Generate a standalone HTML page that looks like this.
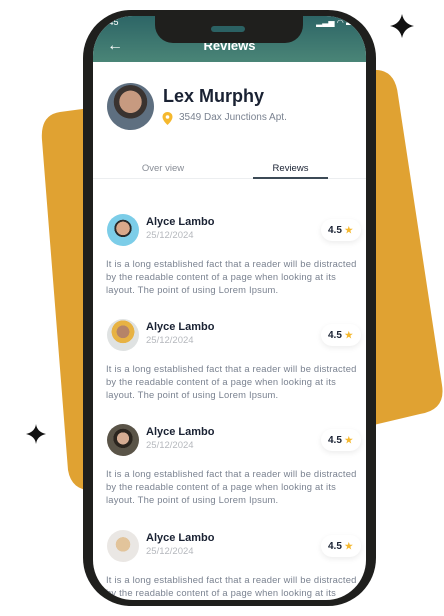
<!DOCTYPE html>
<html><head><style>
*{margin:0;padding:0;box-sizing:border-box}
body{width:444px;height:616px;background:#fff;position:relative;overflow:hidden;font-family:"Liberation Sans",sans-serif}
.phone{position:absolute;left:83px;top:10px;width:293px;height:596px;background:#1f1f1d;border-radius:48px}
.screen{position:absolute;left:10px;top:6px;width:273px;height:584px;background:#fff;border-radius:40px;overflow:hidden}
.hdr{position:absolute;left:0;top:0;width:100%;height:46px;background:linear-gradient(180deg,#2d6566,#4a8577)}
.notch{position:absolute;left:62px;top:0;width:148px;height:27px;background:#1f1f1d;border-radius:0 0 18px 18px}
.av{position:absolute;border-radius:50%}
.name{position:absolute;font-weight:bold;font-size:11px;color:#1a2233}
.date{position:absolute;font-size:9.5px;color:#b5b8bd}
.txt{position:absolute;left:13px;width:254px;font-size:9.4px;letter-spacing:0.2px;line-height:13px;color:#7a8290}
.rate{position:absolute;left:228px;width:40px;height:22px;border-radius:11px;background:#fff;box-shadow:0 2px 6px rgba(0,0,0,.08);font-size:10px;font-weight:bold;color:#1a2233;line-height:22px;padding-left:7px}
.rate span{color:#f5b82e;font-size:9px}
</style></head><body>
<svg style="position:absolute;left:0;top:0" width="444" height="616">
<path d="M60 112 L372 70 Q395 68 398 95 L442 385 Q446 410 420 414 L100 490 Q72 494 68 470 L42 140 Q40 115 60 112Z" fill="#e0a232"/>
<path d="M402 14 Q404 24 414 26 Q404 28 402 38 Q400 28 390 26 Q400 24 402 14Z" fill="#111"/>
<path d="M36 424 Q37 432 46 434 Q37 436 36 444 Q35 436 26 434 Q35 432 36 424Z" fill="#111"/>
</svg>
<div class="phone"><div class="screen">
<div class="hdr"></div>
<div style="position:absolute;left:14px;top:21px;color:#fff;font-size:16px">&#8592;</div>
<div style="position:absolute;left:0;width:100%;top:22px;text-align:center;color:#fff;font-size:13px;font-weight:bold">Reviews</div>
<div style="position:absolute;left:8px;top:1px;color:#fff;font-size:9px">4:45</div>
<div style="position:absolute;right:12px;top:2px;color:#fff;font-size:8px">▂▃▅ ◠ ▬</div>
<div class="notch"><div style="position:absolute;left:56px;top:10px;width:34px;height:6px;border-radius:3px;background:#2b6163"></div></div>
<div class="av" style="left:14px;top:67px;width:47px;height:47px;background:radial-gradient(circle at 50% 40%,#c79a80 0 30%,#3a3330 31% 45%,#5e6f80 46%)"></div>
<div style="position:absolute;left:70px;top:70px;font-size:18px;font-weight:bold;color:#1a2233">Lex Murphy</div>
<svg style="position:absolute;left:69px;top:96px" width="11" height="13"><path d="M5.5 0C2.5 0 0.5 2.2 0.5 5c0 3.5 5 8 5 8s5-4.5 5-8C10.5 2.2 8.5 0 5.5 0z" fill="#f5b82e"/><circle cx="5.5" cy="5" r="1.8" fill="#fff"/></svg>
<div style="position:absolute;left:86px;top:96px;font-size:10px;color:#7a8290">3549 Dax Junctions Apt.</div>
<div style="position:absolute;left:35px;top:147px;font-size:9.5px;color:#888d96;width:70px;text-align:center">Over view</div>
<div style="position:absolute;left:160px;top:147px;font-size:9.5px;color:#1a2233;width:75px;text-align:center">Reviews</div>
<div style="position:absolute;left:0;top:162px;width:100%;height:1px;background:#eceef0"></div>
<div style="position:absolute;left:160px;top:161px;width:75px;height:2px;background:#3c4a56"></div>

<div class="av" style="left:14px;top:198px;width:32px;height:32px;background:radial-gradient(circle at 50% 45%,#d9a88a 0 28%,#2a2a2a 29% 36%,#7ccde8 37%)"></div>
<div class="name" style="left:53px;top:200px">Alyce Lambo</div><div class="date" style="left:53px;top:214px">25/12/2024</div>
<div class="rate" style="top:203px">4.5 <span>★</span></div>
<div class="txt" style="top:241px">It is a long established fact that a reader will be distracted by the readable content of a page when looking at its layout. The point of using Lorem Ipsum.</div>

<div class="av" style="left:14px;top:303px;width:32px;height:32px;background:radial-gradient(circle at 50% 40%,#b58468 0 25%,#e7b243 26% 45%,#dfe2e2 46%)"></div>
<div class="name" style="left:53px;top:305px">Alyce Lambo</div><div class="date" style="left:53px;top:319px">25/12/2024</div>
<div class="rate" style="top:308px">4.5 <span>★</span></div>
<div class="txt" style="top:346px">It is a long established fact that a reader will be distracted by the readable content of a page when looking at its layout. The point of using Lorem Ipsum.</div>

<div class="av" style="left:14px;top:408px;width:32px;height:32px;background:radial-gradient(circle at 50% 45%,#d5ac93 0 25%,#2b251f 26% 40%,#5a5448 41%)"></div>
<div class="name" style="left:53px;top:410px">Alyce Lambo</div><div class="date" style="left:53px;top:424px">25/12/2024</div>
<div class="rate" style="top:413px">4.5 <span>★</span></div>
<div class="txt" style="top:451px">It is a long established fact that a reader will be distracted by the readable content of a page when looking at its layout. The point of using Lorem Ipsum.</div>

<div class="av" style="left:14px;top:514px;width:32px;height:32px;background:radial-gradient(circle at 50% 45%,#e2c49b 0 30%,#eae7e4 31%)"></div>
<div class="name" style="left:53px;top:516px">Alyce Lambo</div><div class="date" style="left:53px;top:530px">25/12/2024</div>
<div class="rate" style="top:519px">4.5 <span>★</span></div>
<div class="txt" style="top:557px">It is a long established fact that a reader will be distracted by the readable content of a page when looking at its layout.</div>
</div></div>
</body></html>
